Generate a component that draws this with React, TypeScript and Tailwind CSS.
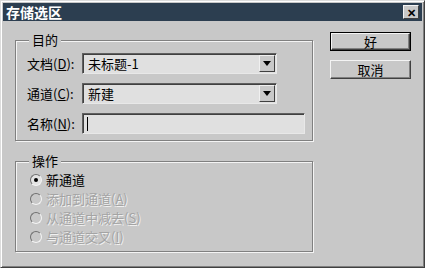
const font = { fontFamily: '"Noto Sans CJK SC", "Liberation Sans", sans-serif' };

function Label({ text, k }: { text: string; k: string }) {
  return (
    <span className="w-[66px] shrink-0 whitespace-nowrap pl-[11px] text-[13px] leading-none text-black">
      {text}(<u>{k}</u>):
    </span>
  );
}

function Select({ value }: { value: string }) {
  return (
    <div className="flex h-[21px] w-[195px] items-center border border-t-[#606060] border-l-[#606060] border-r-[#e8e8e8] border-b-[#e8e8e8] bg-[#e0e0e0] shadow-[inset_1px_1px_0_#404040]">
      <span className="flex-1 pl-[5px] text-[13px] leading-none text-black">{value}</span>
      <div className="mr-[1px] flex h-[17px] w-[16px] items-center justify-center border border-t-[#f0f0f0] border-l-[#f0f0f0] border-r-[#404040] border-b-[#404040] bg-[#c8c8c8]">
        <div className="h-0 w-0 border-x-[4px] border-t-[5px] border-x-transparent border-t-black" />
      </div>
    </div>
  );
}

function Radio({ label, checked, disabled }: { label: React.ReactNode; checked?: boolean; disabled?: boolean }) {
  return (
    <div className="flex h-[19px] items-center">
      <div
        className={
          'flex h-[12px] w-[12px] items-center justify-center rounded-full border border-t-[#707070] border-l-[#707070] border-r-[#f4f4f4] border-b-[#f4f4f4] ' +
          (disabled ? 'bg-[#c8c8c8]' : 'bg-[#e4e4e4]')
        }
      >
        {checked && <div className="h-[4px] w-[4px] rounded-full bg-black" />}
      </div>
      <span
        className={
          'ml-[4px] whitespace-nowrap text-[13px] leading-none ' +
          (disabled ? 'text-[#a4a4a4] [text-shadow:1px_1px_0_#f0f0f0]' : 'text-black')
        }
      >
        {label}
      </span>
    </div>
  );
}

function Group({ title, className, children }: { title: string; className: string; children: React.ReactNode }) {
  return (
    <div className={'relative w-[298px] border border-[#808080] shadow-[inset_1px_1px_0_#f4f4f4,1px_1px_0_#f4f4f4] ' + className}>
      <span className="absolute left-[13px] top-[-8px] bg-[#c8c8c8] px-[3px] text-[13px] leading-none text-black">
        {title}
      </span>
      {children}
    </div>
  );
}

function Button({ text, primary }: { text: string; primary?: boolean }) {
  return (
    <div className={'h-[19px] w-[81px] ' + (primary ? 'border border-black' : '')}>
      <div className="flex h-full w-full items-center justify-center border border-t-[#f4f4f4] border-l-[#f4f4f4] border-r-[#404040] border-b-[#404040] bg-[#c8c8c8] text-[13px] leading-none text-black shadow-[inset_-1px_-1px_0_#808080]">
        {text}
      </div>
    </div>
  );
}

export default function App() {
  return (
    <div
      className="h-[268px] w-[425px] border border-t-[#dcdcdc] border-l-[#dcdcdc] border-r-[#404040] border-b-[#404040] bg-[#c8c8c8] shadow-[inset_1px_1px_0_#ffffff,inset_-1px_-1px_0_#808080]"
      style={font}
    >
      <div className="mx-[2px] mt-[2px] flex h-[18px] items-center justify-between bg-[#2c3e50] pl-[3px] pr-[3px]">
        <span className="text-[14px] font-bold leading-none text-white">存储选区</span>
        <div className="flex h-[14px] w-[16px] items-center justify-center border border-t-[#f4f4f4] border-l-[#f4f4f4] border-r-[#404040] border-b-[#404040] bg-[#c8c8c8] text-[11px] font-bold leading-none text-black">
          ✕
        </div>
      </div>

      <div className="flex pl-[14px]">
        <div className="flex flex-col pt-[19px]">
          <Group title="目的" className="h-[101px]">
            <div className="flex flex-col gap-[9px] pt-[12px]">
              <div className="flex items-center">
                <Label text="文档" k="D" />
                <Select value="未标题-1" />
              </div>
              <div className="flex items-center">
                <Label text="通道" k="C" />
                <Select value="新建" />
              </div>
              <div className="flex items-center">
                <Label text="名称" k="N" />
                <div className="flex h-[21px] w-[223px] items-center border border-t-[#606060] border-l-[#606060] border-r-[#e8e8e8] border-b-[#e8e8e8] bg-[#e0e0e0] shadow-[inset_1px_1px_0_#404040]">
                  <div className="ml-[4px] h-[14px] w-[1px] bg-black" />
                </div>
              </div>
            </div>
          </Group>

          <Group title="操作" className="mt-[20px] h-[91px]">
            <div className="flex flex-col pl-[14px] pt-[8px]">
              <Radio label="新通道" checked />
              <Radio label={<>添加到通道(<u>A</u>)</>} disabled />
              <Radio label={<>从通道中减去(<u>S</u>)</>} disabled />
              <Radio label={<>与通道交叉(<u>I</u>)</>} disabled />
            </div>
          </Group>
        </div>

        <div className="ml-[17px] flex flex-col gap-[9px] pt-[11px]">
          <Button text="好" primary />
          <Button text="取消" />
        </div>
      </div>
    </div>
  );
}
